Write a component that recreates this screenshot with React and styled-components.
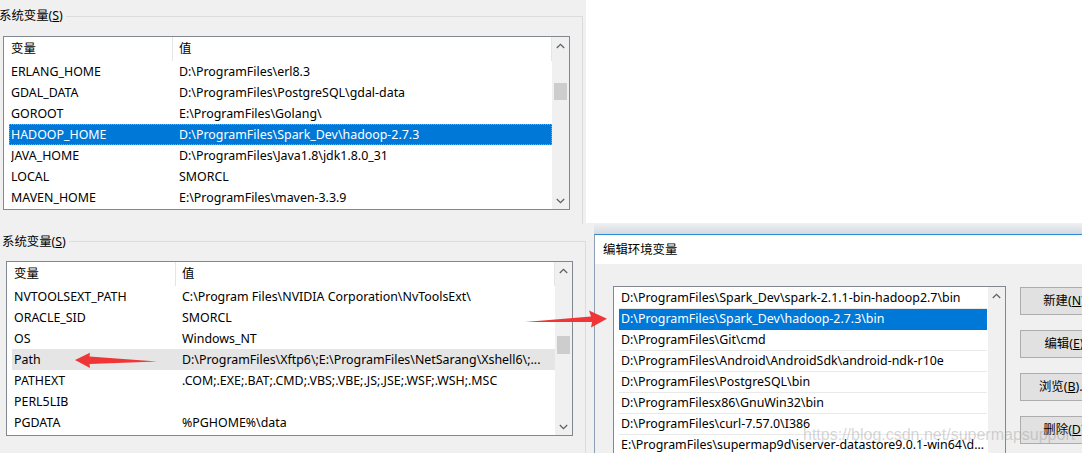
import React from "react";
import styled, { createGlobalStyle } from "styled-components";

const uiFont = `"Noto Sans", "Noto Sans CJK SC", sans-serif`;
const line = "#dcdcdc";

const GlobalStyle = createGlobalStyle`
  html, body {
    margin: 0;
    padding: 0;
    background: #f0f0f0;
  }
  body {
    font-family: ${uiFont};
    font-size: 12.4px;
    color: #000;
  }
`;

const Screen = styled.div`
  position: relative;
  width: 1082px;
  height: 453px;
  overflow: hidden;
  background: #f0f0f0;
  display: grid;
  grid: 224px 229px / 100%;
`;

const TopRow = styled.div`
  display: flex;
  align-items: flex-start;
  min-height: 0;
`;

const BottomRow = styled.div`
  display: flex;
  min-height: 0;
`;

const BlankPane = styled.div`
  flex: 1;
  height: 223px;
  margin-left: 3px;
  background: #fff;
`;

// group box: label, rule running to the right, right edge going down
const Group = styled.div`
  flex: none;
  width: ${props => props.width}px;
  margin-left: ${props => props.offset || 0}px;
  height: 100%;
  display: grid;
  grid: ${props => props.titleHeight}px 1fr / auto 1fr;
`;

const GroupLabel = styled.div`
  line-height: ${props => props.titleHeight}px;
  padding: 0 3px 0 ${props => props.indent || 0}px;
  white-space: nowrap;
`;

const GroupRule = styled.div`
  margin-top: ${props => props.ruleTop}px;
  border-top: 1px solid ${line};
  border-right: 1px solid ${line};
`;

const GroupBody = styled.div`
  grid-column: 1 / -1;
  border-right: 1px solid ${line};
  padding: ${props => props.pad};
`;

const ListView = styled.div`
  flex: none;
  box-sizing: border-box;
  width: ${props => props.width}px;
  height: ${props => props.height}px;
  border: 1px solid #828790;
  background: #fff;
  display: grid;
  grid: 100% / 1fr 17px;
  overflow: hidden;
`;

const ListMain = styled.div`
  display: flex;
  flex-direction: column;
  min-width: 0;
  padding-top: ${props => props.padTop || 0}px;
`;

const Header = styled.div`
  flex: none;
  height: 24px;
  display: grid;
  grid-template-columns: 169px 1fr;
  border-right: 1px solid #e5e5e5;
`;

const HeaderCell = styled.div`
  line-height: 24px;
  padding-left: ${props => (props.first ? 7 : 6)}px;
  border-right: ${props => (props.first ? "1px solid #e5e5e5" : "none")};
`;

const Row = styled.div`
  flex: none;
  box-sizing: border-box;
  height: 21px;
  line-height: ${props => (props.focused ? 19 : 21)}px;
  margin-left: 5px;
  padding-left: ${props => (props.focused ? 1 : 2)}px;
  display: grid;
  grid-template-columns: 168px 1fr;
  white-space: nowrap;
  overflow: hidden;
  background: ${props => (props.selected ? "#0078d7" : props.hover ? "#e5e5e5" : "transparent")};
  color: ${props => (props.selected ? "#fff" : "#000")};
  border: ${props => (props.focused ? "1px dotted #e8913a" : "none")};
`;

const Cell = styled.span`
  overflow: hidden;
  text-overflow: clip;
`;

const ScrollBar = styled.div`
  background: #f0f0f0;
  display: flex;
  flex-direction: column;
`;

const ScrollArrow = styled.div`
  flex: none;
  height: 17px;
  display: flex;
  align-items: center;
  justify-content: center;
`;

const ScrollTrack = styled.div`
  flex: 1;
`;

const ScrollThumb = styled.div`
  margin: ${props => props.top}px 2px 0;
  height: ${props => props.size}px;
  background: #cdcdcd;
`;

const Chevron = ({ down }) => (
  <svg width="9" height="6" viewBox="0 0 9 6">
    <path
      d={down ? "M0.8 1 L4.5 4.6 L8.2 1" : "M0.8 5 L4.5 1.4 L8.2 5"}
      fill="none"
      stroke="#606060"
      strokeWidth="1.3"
    />
  </svg>
);

const Scroller = ({ thumbTop, thumbSize, noDown }) => (
  <ScrollBar>
    <ScrollArrow><Chevron /></ScrollArrow>
    <ScrollTrack>
      {thumbSize ? <ScrollThumb top={thumbTop} size={thumbSize} /> : null}
    </ScrollTrack>
    {noDown ? null : <ScrollArrow><Chevron down /></ScrollArrow>}
  </ScrollBar>
);

// edit dialog
const Dialog = styled.div`
  flex: 1;
  min-width: 0;
  margin-left: ${props => props.gap}px;
  display: flex;
  flex-direction: column;
`;

const DialogShadow = styled.div`
  flex: none;
  height: 10px;
  background: linear-gradient(#eceef1, #d5dae0);
`;

const DialogWindow = styled.div`
  flex: 1;
  display: flex;
  flex-direction: column;
  border-left: 1px solid #8c9fb3;
  border-top: 1px solid #2b88d8;
  background: #f0f0f0;
  min-height: 0;
`;

const TitleBar = styled.div`
  flex: none;
  height: 29px;
  line-height: 29px;
  padding-left: 8px;
  background: #fff;
`;

const DialogBody = styled.div`
  flex: 1;
  display: flex;
  align-items: flex-start;
  gap: 14px;
  padding: 22px 0 0 18px;
  overflow: hidden;
`;

const EditRow = styled.div`
  flex: none;
  box-sizing: border-box;
  height: 21px;
  line-height: 20px;
  margin: 0 1px 0 5px;
  padding-left: 2px;
  white-space: nowrap;
  overflow: hidden;
  border-bottom: 1px solid ${props => (props.selected ? "#0078d7" : "#e9e9e9")};
  background: ${props => (props.selected ? "#0078d7" : "transparent")};
  color: ${props => (props.selected ? "#fff" : "#000")};
`;

const ButtonColumn = styled.div`
  flex: none;
  display: flex;
  flex-direction: column;
  gap: 15px;
  margin-top: 1px;
`;

const Button = styled.div`
  box-sizing: border-box;
  width: 88px;
  height: 28px;
  line-height: 26px;
  text-align: center;
  border: 1px solid #adadad;
  background: #e1e1e1;
  white-space: nowrap;
`;

const Watermark = styled.div`
  position: absolute;
  left: 803px;
  top: 426px;
  font-family: "Liberation Sans", Arial, sans-serif;
  font-size: 16px;
  color: rgba(150, 150, 150, 0.4);
  white-space: nowrap;
  pointer-events: none;
`;

const Overlay = styled.svg`
  position: absolute;
  left: 0;
  top: 0;
  pointer-events: none;
`;

const topVars = [
  ["ERLANG_HOME", "D:\\ProgramFiles\\erl8.3"],
  ["GDAL_DATA", "D:\\ProgramFiles\\PostgreSQL\\gdal-data"],
  ["GOROOT", "E:\\ProgramFiles\\Golang\\"],
  ["HADOOP_HOME", "D:\\ProgramFiles\\Spark_Dev\\hadoop-2.7.3"],
  ["JAVA_HOME", "D:\\ProgramFiles\\Java1.8\\jdk1.8.0_31"],
  ["LOCAL", "SMORCL"],
  ["MAVEN_HOME", "E:\\ProgramFiles\\maven-3.3.9"],
];

const bottomVars = [
  ["NVTOOLSEXT_PATH", "C:\\Program Files\\NVIDIA Corporation\\NvToolsExt\\"],
  ["ORACLE_SID", "SMORCL"],
  ["OS", "Windows_NT"],
  ["Path", "D:\\ProgramFiles\\Xftp6\\;E:\\ProgramFiles\\NetSarang\\Xshell6\\;..."],
  ["PATHEXT", ".COM;.EXE;.BAT;.CMD;.VBS;.VBE;.JS;.JSE;.WSF;.WSH;.MSC"],
  ["PERL5LIB", ""],
  ["PGDATA", "%PGHOME%\\data"],
];

const pathEntries = [
  "D:\\ProgramFiles\\Spark_Dev\\spark-2.1.1-bin-hadoop2.7\\bin",
  "D:\\ProgramFiles\\Spark_Dev\\hadoop-2.7.3\\bin",
  "D:\\ProgramFiles\\Git\\cmd",
  "D:\\ProgramFiles\\Android\\AndroidSdk\\android-ndk-r10e",
  "D:\\ProgramFiles\\PostgreSQL\\bin",
  "D:\\ProgramFilesx86\\GnuWin32\\bin",
  "D:\\ProgramFiles\\curl-7.57.0\\I386",
  "E:\\ProgramFiles\\supermap9d\\iserver-datastore9.0.1-win64\\d...",
];

const VarList = ({ vars, width, height, selected, hover, thumbTop, thumbSize }) => (
  <ListView width={width} height={height}>
    <ListMain>
      <Header>
        <HeaderCell first>变量</HeaderCell>
        <HeaderCell>值</HeaderCell>
      </Header>
      {vars.map(([name, value], idx) => (
        <Row
          key={name}
          selected={idx === selected}
          focused={idx === selected}
          hover={idx === hover}
        >
          <Cell>{name}</Cell>
          <Cell>{value}</Cell>
        </Row>
      ))}
    </ListMain>
    <Scroller thumbTop={thumbTop} thumbSize={thumbSize} />
  </ListView>
);

const GroupTitle = ({ indent, titleHeight }) => (
  <GroupLabel indent={indent} titleHeight={titleHeight}>
    系统变量(<u>S</u>)
  </GroupLabel>
);

const App = () => (
  <Screen>
    <GlobalStyle />
    <TopRow>
      <Group width={584} offset={-1} titleHeight={32}>
        <GroupTitle titleHeight={32} />
        <GroupRule ruleTop={16} />
        <GroupBody pad="4px 0 0 4px">
          <VarList vars={topVars} width={567} height={174} selected={3} thumbTop={29} thumbSize={17} />
        </GroupBody>
      </Group>
      <BlankPane />
    </TopRow>
    <BottomRow>
      <Group width={586} titleHeight={36}>
        <GroupTitle indent={2} titleHeight={36} />
        <GroupRule ruleTop={17} />
        <GroupBody pad="1px 0 0 6px">
          <VarList vars={bottomVars} width={567} height={175} hover={3} thumbTop={57} thumbSize={18} />
        </GroupBody>
      </Group>
      <Dialog gap={8}>
        <DialogShadow />
        <DialogWindow>
          <TitleBar>编辑环境变量</TitleBar>
          <DialogBody>
            <ListView width={393} height={200}>
              <ListMain padTop={1}>
                {pathEntries.map((p, idx) => (
                  <EditRow key={p} selected={idx === 1}>{p}</EditRow>
                ))}
              </ListMain>
              <Scroller noDown />
            </ListView>
            <ButtonColumn>
              <Button>新建(<u>N</u>)</Button>
              <Button>编辑(<u>E</u>)</Button>
              <Button>浏览(<u>B</u>)...</Button>
              <Button>删除(<u>D</u>)</Button>
            </ButtonColumn>
          </DialogBody>
        </DialogWindow>
      </Dialog>
    </BottomRow>
    <Watermark>https://blog.csdn.net/supermapsupport</Watermark>
    <Overlay width="1082" height="453" viewBox="0 0 1082 453">
      <polygon
        fill="#ef3535"
        points="525,322 591,316.5 589,310.5 607,318.8 591,327.5 592,322"
      />
      <polygon
        fill="#ef3535"
        points="75,360 90,352.8 89.5,356.5 157,361.5 89.5,364 90,368"
      />
    </Overlay>
  </Screen>
);

export default App;
